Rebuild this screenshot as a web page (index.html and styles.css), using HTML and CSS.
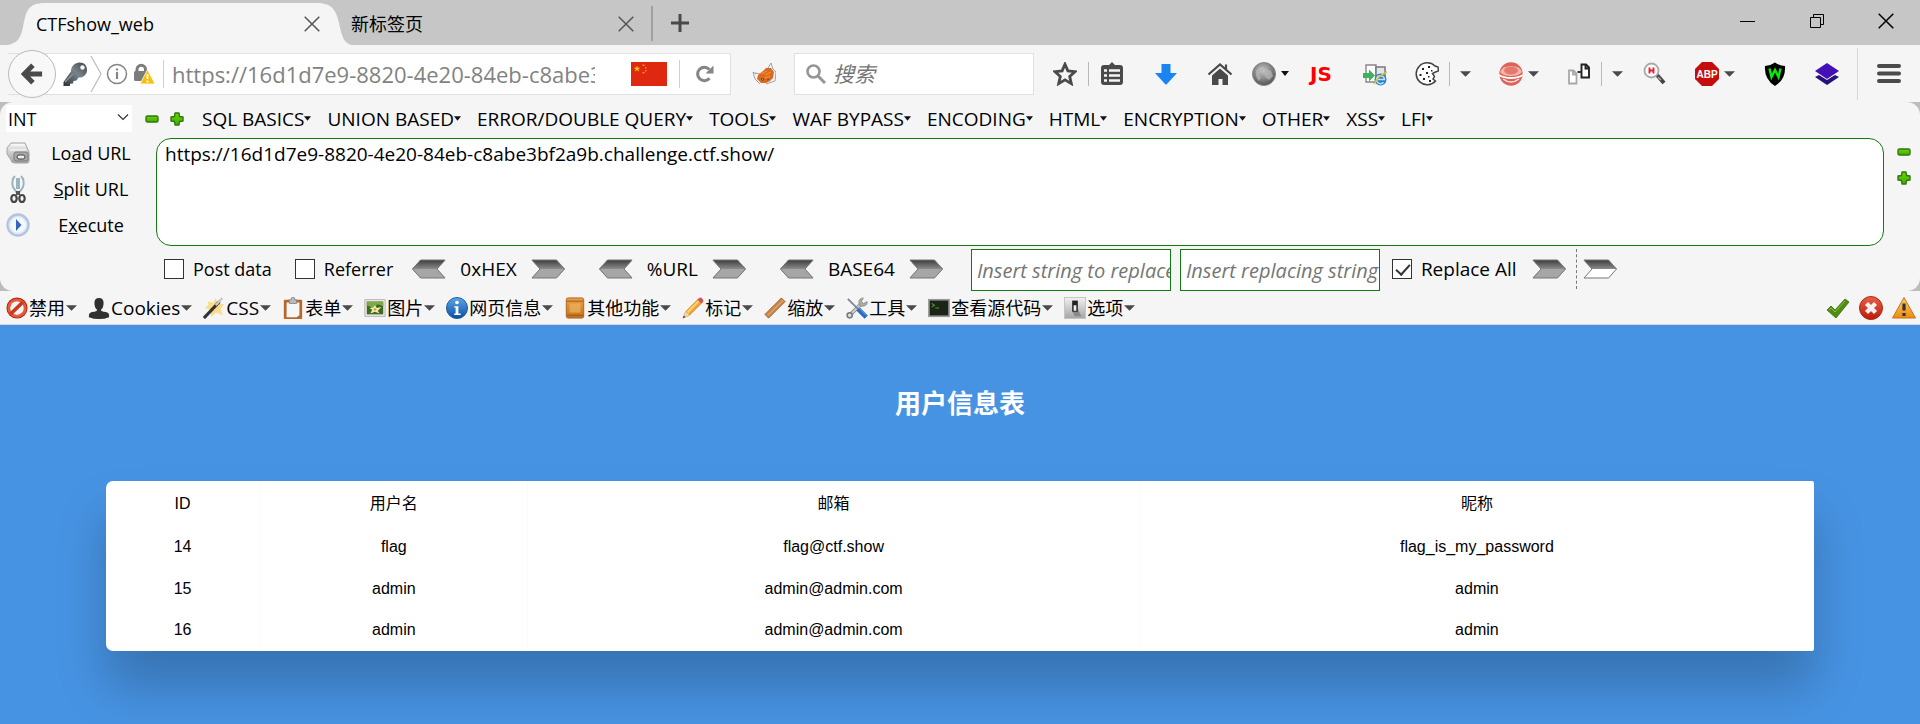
FILE: index.html
```html
<!DOCTYPE html>
<html lang="zh-CN">
<head>
<meta charset="utf-8">
<title>CTFshow_web</title>
<link rel="stylesheet" href="styles.css">
</head>
<body>
<svg class="defs" width="0" height="0" aria-hidden="true">
  <defs>
    <linearGradient id="gGreen" x1="0" y1="0" x2="0" y2="1"><stop offset="0" stop-color="#6fd010"/><stop offset="1" stop-color="#3fae00"/></linearGradient>
    <linearGradient id="gDark" x1="0" y1="0" x2="0" y2="1"><stop offset="0" stop-color="#3c3c3c"/><stop offset="1" stop-color="#8c8c8c"/></linearGradient>
    <linearGradient id="gKey" x1="1" y1="0" x2="0" y2="1"><stop offset="0" stop-color="#3c4248"/><stop offset=".45" stop-color="#7a838c"/><stop offset="1" stop-color="#2c2f33"/></linearGradient>
    <radialGradient id="gGlobe" cx=".45" cy=".35" r=".6"><stop offset="0" stop-color="#c8c8c8"/><stop offset="1" stop-color="#5c5c5c"/></radialGradient>
    <linearGradient id="gRed" x1="0" y1="0" x2="0" y2="1"><stop offset="0" stop-color="#e8604a"/><stop offset="1" stop-color="#b81c08"/></linearGradient>
    <linearGradient id="gBlue" x1="0" y1="0" x2="0" y2="1"><stop offset="0" stop-color="#5ea6e6"/><stop offset="1" stop-color="#0a4fa0"/></linearGradient>
    <linearGradient id="gWood" x1="0" y1="0" x2="0" y2="1"><stop offset="0" stop-color="#e9a24a"/><stop offset="1" stop-color="#c3701c"/></linearGradient>
    <linearGradient id="gSilver" x1="0" y1="0" x2="0" y2="1"><stop offset="0" stop-color="#f2f2f2"/><stop offset="1" stop-color="#a4a4a4"/></linearGradient>
    <linearGradient id="gWarn" x1="0" y1="0" x2="0" y2="1"><stop offset="0" stop-color="#fbd070"/><stop offset="1" stop-color="#ee8a10"/></linearGradient>
  </defs>
  <symbol id="close" viewBox="0 0 16 16"><path d="M.7.7l14.6 14.6M15.3.7L.7 15.3" fill="none" stroke="currentColor" stroke-width="1.5"/></symbol>
  <symbol id="plus" viewBox="0 0 18 18"><path d="M9 0v18M0 9h18" stroke="#4a4a4a" stroke-width="3"/></symbol>
  <symbol id="win-min" viewBox="0 0 16 16"><path d="M0 8h15v1H0z" fill="#000"/></symbol>
  <symbol id="win-max" viewBox="0 0 16 16"><path d="M1.5 4.5h10v10h-10zM4.5 4V1.500h10v10H12" fill="none" stroke="#000"/></symbol>
  <symbol id="caret" viewBox="0 0 12 6"><path d="M0 0h12L6 6z" fill="#4a4a4a"/></symbol>
  <symbol id="tri" viewBox="0 0 8 5"><path d="M0 0h8L4 5z" fill="#111"/></symbol>
  <symbol id="back" viewBox="0 0 24 24"><path d="M13 2.500L3.500 12l9.500 9.500M4 12h19" fill="none" stroke="#4a4a4a" stroke-width="5.500"/></symbol>
  <symbol id="key" viewBox="0 0 24 24"><path d="M8 9.500C8 4 12 .5 16.500.5 21.500.5 24 3.500 24 8c0 4.500-3.500 8-8.500 7.500l-2 3-3 .5-.5 2.500-3 .2V24H.5v-4z" fill="url(#gKey)"/><circle cx="19.500" cy="5.500" r="2.200" fill="#f6f6f6"/><path d="M2 20l8-8" stroke="#8e969e" stroke-width="1.200"/></symbol>
  <symbol id="info-o" viewBox="0 0 22 22"><circle cx="11" cy="11" r="9.500" fill="none" stroke="#858585" stroke-width="1.500"/><path d="M11 9v7M11 5.500v2" stroke="#858585" stroke-width="2.200"/></symbol>
  <symbol id="lock" viewBox="0 0 22 22"><path d="M4 10V6.500a4 4 0 0 1 8.500 0V10" fill="none" stroke="#7c7c7c" stroke-width="3"/><rect x="1" y="8" width="14" height="10" rx="1.500" fill="#7c7c7c"/><path d="M14.500 6.500L22 21H7z" fill="#fcbf0d" stroke="#fff" stroke-width=".8"/><path d="M14.500 11v5M14.500 17.500v2" stroke="#fff" stroke-width="1.800"/></symbol>
  <symbol id="flag" viewBox="0 0 36 24"><path d="M0 0h36v24H0z" fill="#de2910"/><path d="M6 3.500l.8 2.200h2.400L7.300 7.200 8 9.500 6 8.100 4 9.500l.7-2.300-1.900-1.500h2.400z" fill="#ffd400"/><path d="M11.500 2.500h2v1.500h-2zM14 5h1.500v1.500H14zM14 8h1.500v1.500H14zM11.500 10h2v1.500h-2z" fill="#f0902a"/></symbol>
  <symbol id="reload" viewBox="0 0 18 18"><path d="M13.500 13.200A6.700 6.700 0 1 1 13.300 4.500" fill="none" stroke="#858585" stroke-width="3"/><path d="M17.500.5v8h-8z" fill="#858585"/></symbol>
  <symbol id="fox" viewBox="0 0 24 24"><path d="M4 12L1 10l2 7 5 5M3 11l5 1M16 6l3-5 2 6 3 3-1 9-9 3" fill="none" stroke="#8a8a8a" stroke-width=".8"/><path d="M6 13l5-4 3-3 5 0 3 4-1 6-3 3-4 2-5 0-4-4z" fill="#dc6a1e"/><path d="M9 12l6-3M13 13l6-3M10 17l8-3" stroke="#f08a40" stroke-width="1.200"/><path d="M9 17l3-.5-1 2zM15 18l2-.5" fill="#fff" stroke="#632600" stroke-width=".8"/></symbol>
  <symbol id="search" viewBox="0 0 20 20"><circle cx="7.500" cy="7.500" r="6" fill="none" stroke="#969696" stroke-width="2.600"/><path d="M12 12l7 7" stroke="#969696" stroke-width="3"/></symbol>
  <symbol id="star" viewBox="0 0 24 24"><path d="M12 2.200l2.900 6.700 7.200.7-5.400 4.800 1.600 7.200L12 17.900l-6.300 3.700 1.600-7.200L1.900 9.600l7.200-.7z" fill="none" stroke="#4a4a4a" stroke-width="2.800"/></symbol>
  <symbol id="list" viewBox="0 0 24 24"><path d="M9 3l3-3 3 3h5q3 0 3 3v14q0 3-3 3H4q-3 0-3-3V6q0-3 3-3z" fill="#4a4a4a"/><path d="M4 8.500h3M4 13.500h3M4 18.500h3M9 8.500h11M9 13.500h11M9 18.500h11" stroke="#f5f5f5" stroke-width="2.400"/></symbol>
  <symbol id="down" viewBox="0 0 24 24"><path d="M7.500 2h9v9H23L12.500 22.500h-1L1 11h6.500z" fill="#1a84f0"/></symbol>
  <symbol id="home" viewBox="0 0 24 24"><path d="M.5 12.500L12 2.500l11.500 10M18 2.500v5" fill="none" stroke="#4a4a4a" stroke-width="2.200"/><path d="M12 6.500l8 7V23h-5.500v-6h-4v6H4v-9.500z" fill="#4a4a4a"/></symbol>
  <symbol id="globe" viewBox="0 0 24 24"><circle cx="12" cy="12" r="11.500" fill="url(#gGlobe)" stroke="#888"/><path d="M4 9q3-5 8-4l-1 4-4 3 2 4-2 3Q3 15 4 9zM14 7l5 2 2 5-4 4-4-3-1-4z" fill="#b8b8b8" opacity=".7"/></symbol>
  <symbol id="ie-swap" viewBox="0 0 24 24"><path d="M3 3h10v17H3z" fill="#fff" stroke="#888" stroke-width="1.400"/><path d="M13 5h9v12h-9z" fill="#dfe6ec" stroke="#777" stroke-width="1.500"/><path d="M0 11h6V7.500l6 6-6 6V16H0z" fill="#42b058"/><circle cx="17.500" cy="17.500" r="6" fill="#2583c8"/><path d="M13.500 17.500h8a4 4 0 1 0-1 2.800" fill="none" stroke="#bfe3f8" stroke-width="1.500"/><path d="M11 22q5-9 13-12" fill="none" stroke="#e8bb32" stroke-width="1.500"/></symbol>
  <symbol id="cookie" viewBox="0 0 24 24"><path d="M20 4A11 11 0 1 0 20.500 19l-2.500-2 1.500-2.500-2-3 3-1.500 3-1-.5-4z" fill="#fff" stroke="#444" stroke-width="1.500"/><path d="M7 6h2v2H7zM13 4h2v2h-2zM4.500 12h2v2h-2zM11 10h2v2h-2zM8 16h2v2H8zM14 18h2v2h-2zM16 8h1.500v1.500H16zM13 14h1.500v1.500H13z" fill="#222"/></symbol>
  <symbol id="proxy" viewBox="0 0 24 24"><circle cx="12" cy="12" r="11.700" fill="#de6258"/><path d="M1 10q2-6 11-6t11 6q-3 4-11 4T1 10z" fill="#f4b4ac"/><ellipse cx="12" cy="8.500" rx="7" ry="4" fill="#e4786e"/><path d="M0 13q4 3 12 3t12-3" fill="none" stroke="#fff" stroke-width="1.800"/><path d="M4 17q8 6 16 0" stroke="#fbe4e0" stroke-width="1.500" fill="none"/></symbol>
  <symbol id="pages" viewBox="0 0 24 24"><path d="M2 8.500h4.500l3 3v10H2zM6 9v3.500h3" fill="#fff" stroke="#a8a8a8" stroke-width="1.800"/><path d="M14.500 2.500h4.500l3 3v10h-7.500zM18.500 3v3.500h3" fill="#fff" stroke="#222" stroke-width="1.900"/><path d="M10.500 10h3.500" stroke="#333" stroke-width="2"/></symbol>
  <symbol id="hsearch" viewBox="0 0 24 24"><path d="M14 13l7 8" stroke="#444" stroke-width="4"/><path d="M15 15l3 3" stroke="#aaa" stroke-width="1.500"/><circle cx="8.500" cy="8.500" r="7" fill="#fff" stroke="#aaa" stroke-width="1.800"/><path d="M6.500 5.500v6M10.500 5.500v6M6.500 8.500h4" stroke="#e8202c" stroke-width="1.900"/></symbol>
  <symbol id="shield" viewBox="0 0 24 24"><path d="M12 .5q4 3 10 3.500Q23 17 12 24 1 17 2 4q6-.5 10-3.500z" fill="#000"/><path d="M6.500 6.500l2 8.500L12 8l3.500 7 2-8.500" fill="none" stroke="#0ce80c" stroke-width="2.400"/></symbol>
  <symbol id="stack" viewBox="0 0 24 24"><path d="M0 15l4-2 8 5 8-5 4 2-12 8z" fill="#25107c"/><path d="M12 1l12 8-12 8L0 9z" fill="#4310b8"/></symbol>
  <symbol id="menu" viewBox="0 0 24 24"><path d="M2 4h20M2 11.500h20M2 19h20" stroke="#4a4a4a" stroke-width="4" stroke-linecap="round"/></symbol>
  <symbol id="minus-g" viewBox="0 0 14 14"><rect x="1" y="4" width="12" height="6" rx="1.500" fill="url(#gGreen)" stroke="#2e7a08" stroke-width="1.400"/></symbol>
  <symbol id="plus-g" viewBox="0 0 14 14"><path d="M5 1h4l.5 3.500L13 5v4l-3.500.5L9 13H5l-.5-3.500L1 9V5l3.500-.5z" fill="url(#gGreen)" stroke="#2e7a08" stroke-width="1.400" stroke-linejoin="round"/></symbol>
  <symbol id="chev" viewBox="0 0 12 8"><path d="M1 1.500l5 5 5-5" fill="none" stroke="#333" stroke-width="1.200"/></symbol>
  <symbol id="drive" viewBox="0 0 24 24"><path d="M5 2h14l4 9v9q0 2-2 2H9q-4 0-4-3L1 13V7z" fill="url(#gSilver)" stroke="#a4a4a4"/><path d="M4 9h16M5 4h14" stroke="#fff"/><rect x="8" y="11" width="14" height="9" rx="2" fill="#a8a8a8" stroke="#7c7c7c"/><rect x="11" y="14" width="8" height="4" rx="2" fill="#eee" stroke="#444"/></symbol>
  <symbol id="scissors" viewBox="0 0 24 28"><path d="M9 1q-4 4-2 11l4 6M15 1q4 4 2 11l-4 6M11 3v11M13 3v11" fill="none" stroke="#9cb4c0" stroke-width="2"/><path d="M10 16h4v4h-4z" fill="#555"/><ellipse cx="8" cy="23.500" rx="2.700" ry="3.500" fill="none" stroke="#444" stroke-width="2.200"/><ellipse cx="16" cy="23.500" rx="2.700" ry="3.500" fill="none" stroke="#444" stroke-width="2.200"/></symbol>
  <symbol id="play" viewBox="0 0 24 24"><circle cx="12" cy="12" r="10.500" fill="#dfeaf8" stroke="#b4c4dc" stroke-width="2.400"/><circle cx="12" cy="12" r="7.500" fill="#f5f9ff"/><path d="M10 6l5.500 6L10 18z" fill="#3468b8"/></symbol>
  <symbol id="arr-r" viewBox="0 0 34 20"><path d="M.5 1h25L34 10H9z" fill="url(#gDark)"/><path d="M9 10h25l-8.500 9H.5z" fill="#a6a6a6"/><path d="M1 1h24.500l8 9-8 9H1l8-9z" fill="none" stroke="#777"/></symbol>
  <symbol id="arr-l" viewBox="0 0 34 20"><path d="M33.500 1h-25L0 10h25z" fill="url(#gDark)"/><path d="M25 10H0l8.500 9h25z" fill="#a6a6a6"/><path d="M33 1H8.500l-8 9 8 9H33l-8-9z" fill="none" stroke="#777"/></symbol>
  <symbol id="arr-w" viewBox="0 0 34 20"><path d="M.5 1h25L34 10H9z" fill="url(#gDark)"/><path d="M9 10h25l-8.500 9H.5z" fill="#fff"/><path d="M1 1h24.500l8 9-8 9H1l8-9z" fill="none" stroke="#777"/></symbol>
  <symbol id="disable" viewBox="0 0 24 24"><circle cx="12" cy="12" r="11.500" fill="#b3230c"/><circle cx="12" cy="12" r="9" fill="none" stroke="#e65a3c" stroke-width="3"/><circle cx="12" cy="12" r="7.500" fill="#f3f3f3"/><path d="M5 18.500L18.500 5.500" stroke="#c8391f" stroke-width="4"/></symbol>
  <symbol id="person" viewBox="0 0 24 24"><path d="M12 1q5 0 5 5.500T14 14q0 2 3 2 6 .5 6 3.500V22q-5 2-11 2T1 22v-2.500Q1 16.500 7 16q3 0 3-2-3-2-3-7.500T12 1z" fill="#303030"/></symbol>
  <symbol id="wand" viewBox="0 0 24 24"><path d="M5 5l6 1 3-5 2 6 7 1-4 5 3 7-8-3-5 5-1-8-6-2 4-3z" fill="#fbdc88"/><path d="M1 23L18 5" stroke="#333" stroke-width="3.400"/><path d="M14 9l7-8" stroke="#c8c8c8" stroke-width="2.600"/></symbol>
  <symbol id="clip" viewBox="0 0 24 24"><rect x="2" y="3" width="20" height="21" rx="1" fill="#b4682c"/><path d="M5 6h14v14l-3 2H5z" fill="#f6f6f6"/><path d="M8 3h2q0-3 2-3t2 3h2v4H8z" fill="#bcbcbc" stroke="#888"/></symbol>
  <symbol id="picture" viewBox="0 0 24 24"><rect x="1" y="3" width="22" height="18" fill="#f4f4f4" stroke="#aaa"/><path d="M3 5h18v14H3z" fill="#3f6a26"/><path d="M3 5h18v5l-6-2-5 4-7-3z" fill="#82a84c"/><path d="M12 9l2 3 5-1-4 4 2 3-5-2-5 2 2-4-3-2 4-.5z" fill="#f0eeb8"/><circle cx="12" cy="13.500" r="1.600" fill="#d8b020"/></symbol>
  <symbol id="info-b" viewBox="0 0 24 24"><circle cx="12" cy="12" r="11.500" fill="url(#gBlue)" stroke="#1a5598"/><circle cx="12" cy="6" r="2" fill="#fff"/><path d="M9 10h4.500v8H16v1.500H9V18h1.500v-6.500H9z" fill="#fff"/></symbol>
  <symbol id="box" viewBox="0 0 24 24"><rect x="2.500" y="1" width="19" height="22" rx="2" fill="url(#gWood)" stroke="#a8601c"/><path d="M3 4.500h18M3 20h18" stroke="#9c5814"/><path d="M6 7h12v10H6z" fill="#eeb260" opacity=".7"/></symbol>
  <symbol id="pencil" viewBox="0 0 24 24"><path d="M1 23l3-7L18 2l4 4L8 20z" fill="#f2a22c" stroke="#b87018" stroke-width=".7"/><path d="M5 16L18 3l1.500 1.500L7 18z" fill="#fcd070"/><path d="M1 23l3-7 4 4z" fill="#f0d8b0"/><path d="M17 3l2.500-2.500q3 0 4 4L21 7z" fill="#cc5560"/><path d="M1 23l1.200-2.600 1.400 1.400z" fill="#222"/></symbol>
  <symbol id="ruler" viewBox="0 0 24 24"><path d="M1 19L19 1l4 4L5 23z" fill="#c88448" stroke="#99602c"/><path d="M4 20L21 3.500" stroke="#e0a468" stroke-width="1.500"/></symbol>
  <symbol id="tools" viewBox="0 0 24 24"><path d="M4 20L18 6" stroke="#8c8c8c" stroke-width="4"/><path d="M4 20L18 6" stroke="#d0d0d0" stroke-width="2"/><path d="M23 5l-4 2-2-2 2-4q-5 0-5 5t5 4 4-5z" fill="#aaa" stroke="#777" stroke-width=".6"/><circle cx="4" cy="20" r="2.800" fill="#ddd" stroke="#777" stroke-width="1.600"/><path d="M2 2l11 11" stroke="#7c8894" stroke-width="2"/><path d="M13 13l9 9" stroke="#2b6cc4" stroke-width="5"/><path d="M14 12l8 8" stroke="#6ca4e8"/></symbol>
  <symbol id="term" viewBox="0 0 24 24"><rect x="1" y="3" width="22" height="18" fill="#1c2418" stroke="#999" stroke-width="1.800"/><path d="M4 7l3 2-3 2M8 12h4" fill="none" stroke="#5c9830" stroke-width="1.200"/></symbol>
  <symbol id="switch" viewBox="0 0 24 24"><rect x=".5" y=".5" width="23" height="23" fill="url(#gSilver)" stroke="#c4c4c4"/><path d="M9 4h6v9l4 8h-7L9 16z" fill="#888"/><path d="M9 4h6v12H9z" fill="#222"/><path d="M10.500 9h3v6h-3z" fill="#eee"/></symbol>
  <symbol id="ok" viewBox="0 0 24 24"><path d="M1 14l4-4 4 4L19 3l4 3L10 22z" fill="#4f8d12" stroke="#356c08" stroke-width=".8"/><path d="M3 14l2-2 4 4L19 5" fill="none" stroke="#8cbc48"/></symbol>
  <symbol id="err" viewBox="0 0 24 24"><circle cx="12" cy="12" r="11.500" fill="url(#gRed)" stroke="#b02a14"/><path d="M7.500 7.500l9 9M16.500 7.500l-9 9" stroke="#f4f0ee" stroke-width="4.400"/></symbol>
  <symbol id="warn" viewBox="0 0 24 24"><path d="M12 1.500L23.500 22H.5z" fill="url(#gWarn)" stroke="#c47414" stroke-linejoin="round"/><path d="M12 7.500v7M12 17v3" stroke="#333" stroke-width="3.200"/></symbol>
</svg>

<header class="tabbar">
  <div class="tab tab-active">
    <svg class="tab-shape" viewBox="0 0 350 42" preserveAspectRatio="none" aria-hidden="true"><path d="M0 42C14 42 17 34 19 24 22 8 24 0 41 0H313C327 0 332 6 335 20 338 34 340 42 350 42z" fill="#f5f5f5"/></svg>
    <span class="tab-title">CTFshow_web</span>
    <button class="btn tab-close" aria-label="关闭标签页"><svg class="i16"><use href="#close"/></svg></button>
  </div>
  <div class="tab">
    <span class="tab-title">新标签页</span>
    <button class="btn tab-close" aria-label="关闭标签页"><svg class="i16"><use href="#close"/></svg></button>
  </div>
  <button class="btn tab-new" aria-label="打开新标签页"><svg class="i18"><use href="#plus"/></svg></button>
  <div class="win">
    <button class="btn" aria-label="最小化"><svg class="i16"><use href="#win-min"/></svg></button>
    <button class="btn" aria-label="还原"><svg class="i16"><use href="#win-max"/></svg></button>
    <button class="btn" aria-label="关闭"><svg class="i16"><use href="#close"/></svg></button>
  </div>
</header>

<nav class="navbar">
  <div class="location">
    <button class="btn back" aria-label="后退"><svg class="i22"><use href="#back"/></svg></button>
    <svg class="i24 key"><use href="#key"/></svg>
    <svg class="crumb" viewBox="0 0 12 38"><path d="M1 1l10 18L1 37" fill="none" stroke="#bbb" stroke-width="1.200"/></svg>
    <svg class="i22"><use href="#info-o"/></svg>
    <svg class="i22 lock"><use href="#lock"/></svg>
    <span class="vline"></span>
    <input class="url" type="text" aria-label="地址" value="https://16d1d7e9-8820-4e20-84eb-c8abe3bf2a9b.challenge.ctf.show/">
    <svg class="flag"><use href="#flag"/></svg>
    <span class="vline"></span>
    <button class="btn reload" aria-label="刷新"><svg class="i18"><use href="#reload"/></svg></button>
  </div>
  <button class="btn fox" aria-label="FoxyProxy"><svg class="i24"><use href="#fox"/></svg></button>
  <label class="searchbox"><svg class="i20"><use href="#search"/></svg><input type="text" placeholder="搜索" aria-label="搜索"></label>
  <div class="tools">
    <div class="tool marks"><button class="btn" aria-label="收藏"><svg class="i24"><use href="#star"/></svg></button><span class="sep"></span><button class="btn" aria-label="书签"><svg class="i24"><use href="#list"/></svg></button></div>
    <button class="btn tool wide" aria-label="下载"><svg class="i24"><use href="#down"/></svg></button>
    <button class="btn tool wide" aria-label="主页"><svg class="i24"><use href="#home"/></svg></button>
    <button class="btn tool near" aria-label="代理"><svg class="i24"><use href="#globe"/></svg><svg class="caret small"><use href="#tri"/></svg></button>
    <button class="btn tool near js">JS</button>
    <button class="btn tool wide" aria-label="IE"><svg class="i24"><use href="#ie-swap"/></svg></button>
    <div class="tool split"><button class="btn" aria-label="Cookie"><svg class="i24"><use href="#cookie"/></svg></button><span class="sep"></span><button class="btn" aria-label="更多"><svg class="caret"><use href="#caret"/></svg></button></div>
    <button class="btn tool" aria-label="切换代理"><svg class="i24"><use href="#proxy"/></svg><svg class="caret"><use href="#caret"/></svg></button>
    <div class="tool split"><button class="btn" aria-label="页面"><svg class="i24"><use href="#pages"/></svg></button><span class="sep"></span><button class="btn" aria-label="更多"><svg class="caret"><use href="#caret"/></svg></button></div>
    <button class="btn tool near" aria-label="查找"><svg class="i24"><use href="#hsearch"/></svg></button>
    <button class="btn tool" aria-label="Adblock Plus"><svg class="i24" viewBox="0 0 24 24"><path d="M7 0h10l7 7v10l-7 7H7l-7-7V7z" fill="#c60d0d"/><text x="12" y="16" text-anchor="middle" class="abp-text">ABP</text></svg><svg class="caret"><use href="#caret"/></svg></button>
    <button class="btn tool" aria-label="Wappalyzer"><svg class="i24"><use href="#shield"/></svg></button>
    <button class="btn tool" aria-label="图层"><svg class="i24"><use href="#stack"/></svg></button>
    <button class="btn menu" aria-label="菜单"><svg class="i24"><use href="#menu"/></svg></button>
  </div>
</nav>

<div class="hack-wrap">
<section class="hackbar">
  <div class="hack-menu">
    <label class="mode"><select aria-label="类型"><option>INT</option></select><svg class="chev"><use href="#chev"/></svg></label>
    <button class="btn" aria-label="减少"><svg class="i14"><use href="#minus-g"/></svg></button>
    <button class="btn" aria-label="增加"><svg class="i14"><use href="#plus-g"/></svg></button>
    <div class="menus">
      <button class="btn">SQL BASICS<svg class="tri"><use href="#tri"/></svg></button>
      <button class="btn">UNION BASED<svg class="tri"><use href="#tri"/></svg></button>
      <button class="btn">ERROR/DOUBLE QUERY<svg class="tri"><use href="#tri"/></svg></button>
      <button class="btn">TOOLS<svg class="tri"><use href="#tri"/></svg></button>
      <button class="btn">WAF BYPASS<svg class="tri"><use href="#tri"/></svg></button>
      <button class="btn">ENCODING<svg class="tri"><use href="#tri"/></svg></button>
      <button class="btn">HTML<svg class="tri"><use href="#tri"/></svg></button>
      <button class="btn">ENCRYPTION<svg class="tri"><use href="#tri"/></svg></button>
      <button class="btn">OTHER<svg class="tri"><use href="#tri"/></svg></button>
      <button class="btn">XSS<svg class="tri"><use href="#tri"/></svg></button>
      <button class="btn">LFI<svg class="tri"><use href="#tri"/></svg></button>
    </div>
  </div>
  <div class="hack-main">
    <div class="actions">
      <button class="btn"><svg class="i24"><use href="#drive"/></svg><span>Lo<u>a</u>d URL</span></button>
      <button class="btn"><svg class="cut"><use href="#scissors"/></svg><span><u>S</u>plit URL</span></button>
      <button class="btn"><svg class="i24"><use href="#play"/></svg><span>E<u>x</u>ecute</span></button>
    </div>
    <textarea class="payload" aria-label="URL" spellcheck="false">https://16d1d7e9-8820-4e20-84eb-c8abe3bf2a9b.challenge.ctf.show/</textarea>
    <div class="resize">
      <button class="btn" aria-label="缩小"><svg class="i14"><use href="#minus-g"/></svg></button>
      <button class="btn" aria-label="放大"><svg class="i14"><use href="#plus-g"/></svg></button>
    </div>
  </div>
  <div class="hack-opts">
    <label class="check"><input type="checkbox">Post data</label>
    <label class="check"><input type="checkbox">Referrer</label>
    <div class="codec first"><button class="btn" aria-label="解码"><svg class="arr"><use href="#arr-l"/></svg></button><span>0xHEX</span><button class="btn" aria-label="编码"><svg class="arr"><use href="#arr-r"/></svg></button></div>
    <div class="codec"><button class="btn" aria-label="解码"><svg class="arr"><use href="#arr-l"/></svg></button><span>%URL</span><button class="btn" aria-label="编码"><svg class="arr"><use href="#arr-r"/></svg></button></div>
    <div class="codec"><button class="btn" aria-label="解码"><svg class="arr"><use href="#arr-l"/></svg></button><span>BASE64</span><button class="btn" aria-label="编码"><svg class="arr"><use href="#arr-r"/></svg></button></div>
    <div class="replace">
      <input class="rep" type="text" aria-label="查找" placeholder="Insert string to replace">
      <input class="rep" type="text" aria-label="替换" placeholder="Insert replacing string">
    </div>
    <label class="check all"><input type="checkbox" checked>Replace All</label>
    <button class="btn" aria-label="替换"><svg class="arr"><use href="#arr-r"/></svg></button>
    <span class="dash"></span>
    <button class="btn" aria-label="应用"><svg class="arr"><use href="#arr-w"/></svg></button>
  </div>
</section>
</div>

<div class="devbar">
  <button class="btn"><svg class="i22"><use href="#disable"/></svg>禁用<svg class="caret"><use href="#caret"/></svg></button>
  <button class="btn latin"><svg class="i22"><use href="#person"/></svg>Cookies<svg class="caret"><use href="#caret"/></svg></button>
  <button class="btn latin"><svg class="i22"><use href="#wand"/></svg>CSS<svg class="caret"><use href="#caret"/></svg></button>
  <button class="btn"><svg class="i22"><use href="#clip"/></svg>表单<svg class="caret"><use href="#caret"/></svg></button>
  <button class="btn"><svg class="i22"><use href="#picture"/></svg>图片<svg class="caret"><use href="#caret"/></svg></button>
  <button class="btn"><svg class="i22"><use href="#info-b"/></svg>网页信息<svg class="caret"><use href="#caret"/></svg></button>
  <button class="btn"><svg class="i22"><use href="#box"/></svg>其他功能<svg class="caret"><use href="#caret"/></svg></button>
  <button class="btn"><svg class="i22"><use href="#pencil"/></svg>标记<svg class="caret"><use href="#caret"/></svg></button>
  <button class="btn"><svg class="i22"><use href="#ruler"/></svg>缩放<svg class="caret"><use href="#caret"/></svg></button>
  <button class="btn"><svg class="i22"><use href="#tools"/></svg>工具<svg class="caret"><use href="#caret"/></svg></button>
  <button class="btn"><svg class="i22"><use href="#term"/></svg>查看源代码<svg class="caret"><use href="#caret"/></svg></button>
  <button class="btn"><svg class="i22"><use href="#switch"/></svg>选项<svg class="caret"><use href="#caret"/></svg></button>
  <div class="status">
    <svg class="i24"><use href="#ok"/></svg>
    <svg class="i24"><use href="#err"/></svg>
    <svg class="i24"><use href="#warn"/></svg>
  </div>
</div>

<main class="page">
  <h1>用户信息表</h1>
  <table class="users">
    <colgroup><col class="c-id"><col class="c-user"><col class="c-mail"><col></colgroup>
    <thead><tr><th>ID</th><th>用户名</th><th>邮箱</th><th>昵称</th></tr></thead>
    <tbody>
      <tr><td>14</td><td>flag</td><td>flag@ctf.show</td><td>flag_is_my_password</td></tr>
      <tr><td>15</td><td>admin</td><td>admin@admin.com</td><td>admin</td></tr>
      <tr><td>16</td><td>admin</td><td>admin@admin.com</td><td>admin</td></tr>
    </tbody>
  </table>
</main>
</body>
</html>
```
FILE: styles.css
```css
* { box-sizing: border-box; }
html, body { height: 100%; }
body {
  margin: 0;
  display: flex;
  flex-direction: column;
  overflow: hidden;
  background: #f5f5f5;
  color: #000;
  font: 18px/24px "Open Sans", "Noto Sans CJK SC", sans-serif;
}
svg { display: block; flex: none; }
.defs { position: absolute; }
.btn {
  display: flex;
  align-items: center;
  padding: 0;
  border: 0;
  background: none;
  color: inherit;
  font: inherit;
  white-space: nowrap;
}
input, textarea, select { font: inherit; color: inherit; }
.i14 { width: 14px; height: 14px; }
.i16 { width: 16px; height: 16px; }
.i18 { width: 18px; height: 18px; }
.i20 { width: 20px; height: 20px; }
.i22 { width: 22px; height: 22px; }
.i24 { width: 24px; height: 24px; }
.caret { width: 11px; height: 6px; }
.caret.small { width: 8px; height: 5px; }
.tri { width: 7px; height: 5px; }

/* tab strip */
.tabbar {
  display: flex;
  align-items: stretch;
  height: 45px;
  padding-left: 4px;
  background: #c6c6c6;
}
.tab {
  position: relative;
  display: flex;
  align-items: center;
  justify-content: space-between;
  width: 302px;
  margin: 6px 0 4px;
  padding-right: 17px;
  border-right: 2px solid #a0a0a0;
}
.tab-active { width: 347px; margin: 3px 0 0; padding: 0 31px 0 32px; border: 0; }
.tab-shape { position: absolute; left: 0; top: 0; width: 350px; height: 42px; }
.tab-title, .tab-close { position: relative; }
.tab-close { color: #555; }
.tab-new { padding: 0 18px; }
.win { display: flex; gap: 53px; margin-left: auto; padding: 0 26px 4px 0; }

/* navigation row */
.navbar {
  display: flex;
  align-items: center;
  height: 57px;
  padding: 0 19px 0 8px;
}
.location {
  flex: 1;
  display: flex;
  align-items: center;
  height: 42px;
  min-width: 0;
  background: linear-gradient(to right, transparent 40px, #fff 40px);
  border: 1px solid #e0e0e0;
  border-left: 0;
}
.back {
  justify-content: center;
  width: 48px;
  height: 48px;
  border: 1px solid #bbb;
  border-radius: 50%;
  background: #f8f8f8;
}
.key { margin-left: 7px; }
.crumb { width: 12px; height: 38px; margin: 0 4px 0 3px; }
.lock { margin: 0 8px 0 5px; }
.vline { width: 1px; height: 28px; background: #d0d0d0; }
.url {
  flex: 1;
  min-width: 0;
  margin: 0 36px 0 8px;
  padding: 0;
  border: 0;
  background: none;
  color: #828282;
  font-size: 22px;
}
.flag { width: 36px; height: 24px; margin-right: 12px; }
.reload { padding: 0 16px; }
.fox { margin: 0 18px 0 21px; }
.searchbox {
  display: flex;
  align-items: center;
  width: 240px;
  height: 42px;
  padding-left: 11px;
  background: #fff;
  border: 1px solid #e0e0e0;
}
.searchbox input { width: 180px; margin-left: 7px; padding: 0; border: 0; background: none; font-size: 21px; }
::placeholder { color: #757575; font-style: italic; opacity: 1; }
.tools { display: flex; align-items: center; padding-left: 19px; }
.tools .tool { display: flex; align-items: center; gap: 5px; margin-left: 28px; }
.tools .marks { gap: 11px; margin-left: 0; }
.tools .wide { margin-left: 30px; }
.tools .near { margin-left: 20px; }
.tools .split { gap: 10px; }
.sep { width: 1px; height: 24px; background: #b8b8b8; }
.js { width: 24px; justify-content: center; color: #f00; font: bold 20px/24px "DejaVu Sans", sans-serif; }
.menu { height: 52px; margin-left: 18px; padding-left: 19px; border-left: 1px solid #d8d8d8; }
.abp-text { fill: #fff; font: bold 10px "Liberation Sans", sans-serif; }

/* hackbar */
.hack-wrap { background: #bcbcbc; }
.hackbar { padding-top: 3px; border-radius: 13px; background: #f5f5f5; }
.hack-menu { display: flex; align-items: center; gap: 11px; padding-left: 6px; }
.mode { position: relative; display: block; margin-right: 2px; }
.mode select {
  display: block;
  appearance: none;
  width: 126px;
  height: 27px;
  padding: 0 2px;
  border: 0;
  background: #fff;
}
.mode .chev { position: absolute; right: 3px; top: 8px; width: 12px; height: 8px; }
.menus { display: flex; gap: 16px; margin-left: 7px; font-size: 19px; }
.hack-main { display: flex; padding: 6px 9px 0 6px; }
.actions { display: flex; flex-direction: column; gap: 12px; width: 150px; padding-top: 3px; }
.actions .btn { height: 24px; gap: 14px; }
.actions span { width: 94px; text-align: center; }
.cut { width: 24px; height: 28px; }
.payload {
  flex: 1;
  height: 108px;
  padding: 3px 8px;
  border: 1px solid #137a13;
  border-radius: 15px;
  background: #fff;
  outline: 0;
  resize: none;
  font-size: 19px;
}
.resize { display: flex; flex-direction: column; gap: 12px; padding: 7px 0 0 13px; }
.hack-opts { display: flex; align-items: center; height: 45px; padding: 0 0 0 164px; }
.check { display: flex; align-items: center; gap: 9px; margin-right: 23px; white-space: nowrap; }
.check input {
  appearance: none;
  position: relative;
  width: 20px;
  height: 20px;
  margin: 0;
  border: 1px solid #333;
  background: #fff;
}
.check input:checked::after {
  content: "";
  position: absolute;
  left: 6px;
  top: 1px;
  width: 6px;
  height: 12px;
  border: solid #333;
  border-width: 0 2px 2px 0;
  transform: rotate(42deg);
}
.arr { width: 34px; height: 20px; }
.codec { display: flex; align-items: center; gap: 14px; margin-left: 34px; font-size: 19px; }
.codec.first { margin-left: -4px; }
.replace { display: flex; align-self: flex-end; gap: 9px; margin: 0 12px 0 28px; }
.rep { width: 200px; height: 42px; padding: 0 0 0 5px; border: 1px solid #137a13; background: #fff; font-size: 20px; }
.check.all { margin-right: 15px; font-size: 19px; }
.dash { height: 40px; margin: 0 6px 0 10px; border-left: 1px dashed #777; }

/* developer toolbar */
.devbar {
  display: flex;
  align-items: center;
  gap: 11px;
  height: 34px;
  padding: 0 4px 0 6px;
  border-bottom: 1px solid #d4d8dc;
}
.devbar .btn { gap: 1px; }
.devbar .latin { font-size: 19px; }
.status { display: flex; gap: 9px; margin-left: auto; }

/* page */
.page {
  flex: 1;
  padding: 60px 106px 0;
  background: #4793e3;
}
.page h1 {
  margin: 0 0 58px;
  color: #fff;
  font: bold 26px/38px "Liberation Sans", "Noto Sans CJK SC", sans-serif;
  text-align: center;
}
.users {
  width: 100%;
  table-layout: fixed;
  border-collapse: collapse;
  border-radius: 7px 2px 2px 7px;
  background: #fff;
  box-shadow: 0 35px 50px rgba(0, 0, 0, .22);
  font: 16px/18px "Liberation Sans", "Noto Sans CJK SC", sans-serif;
  text-align: center;
}
.users th { padding: 14px 0 13px; font-weight: normal; }
.users td { padding: 12px 0; }
.users tr:last-child td { padding: 11px 0 12px; }
.users th + th, .users td + td { border-left: 1px solid #fafafa; }
.users tr:first-child th { padding-bottom: 13px; }
.c-id { width: 9%; }
.c-user { width: 15.7%; }
.c-mail { width: 35.8%; }
```
